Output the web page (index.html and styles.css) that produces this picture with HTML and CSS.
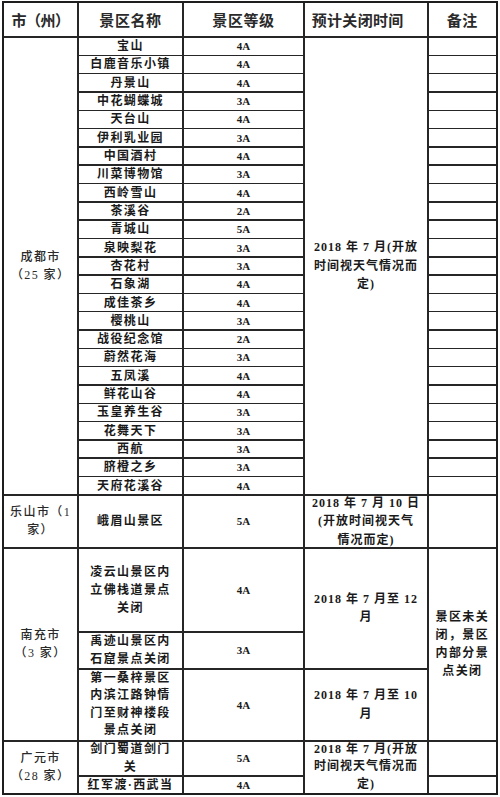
FILE: index.html
```html
<!DOCTYPE html>
<html lang="zh-CN">
<head>
<meta charset="utf-8">
<title>景区关闭时间</title>
<link rel="stylesheet" href="styles.css">
</head>
<body>
<div class="sheet">
  <div class="cell head h-city">市（州）</div>
  <div class="cell head">景区名称</div>
  <div class="cell head">景区等级</div>
  <div class="cell head h-time">预计关闭时间</div>
  <div class="cell head">备注</div>

  <div class="cell city span-25">成都市<br>（25 家）</div>
  <div class="cell name">宝山</div><div class="cell grade">4A</div>
  <div class="cell time span-25">2018 年 7 月(开放<br>时间视天气情况而<br>定)</div>
  <div class="cell"></div>
  <div class="cell name">白鹿音乐小镇</div><div class="cell grade">4A</div><div class="cell"></div>
  <div class="cell name">丹景山</div><div class="cell grade">4A</div><div class="cell"></div>
  <div class="cell name">中花蝴蝶城</div><div class="cell grade">3A</div><div class="cell"></div>
  <div class="cell name">天台山</div><div class="cell grade">4A</div><div class="cell"></div>
  <div class="cell name">伊利乳业园</div><div class="cell grade">3A</div><div class="cell"></div>
  <div class="cell name">中国酒村</div><div class="cell grade">4A</div><div class="cell"></div>
  <div class="cell name">川菜博物馆</div><div class="cell grade">3A</div><div class="cell"></div>
  <div class="cell name">西岭雪山</div><div class="cell grade">4A</div><div class="cell"></div>
  <div class="cell name">茶溪谷</div><div class="cell grade">2A</div><div class="cell"></div>
  <div class="cell name">青城山</div><div class="cell grade">5A</div><div class="cell"></div>
  <div class="cell name">泉映梨花</div><div class="cell grade">3A</div><div class="cell"></div>
  <div class="cell name">杏花村</div><div class="cell grade">3A</div><div class="cell"></div>
  <div class="cell name">石象湖</div><div class="cell grade">4A</div><div class="cell"></div>
  <div class="cell name">成佳茶乡</div><div class="cell grade">4A</div><div class="cell"></div>
  <div class="cell name">樱桃山</div><div class="cell grade">3A</div><div class="cell"></div>
  <div class="cell name">战役纪念馆</div><div class="cell grade">2A</div><div class="cell"></div>
  <div class="cell name">蔚然花海</div><div class="cell grade">3A</div><div class="cell"></div>
  <div class="cell name">五凤溪</div><div class="cell grade">4A</div><div class="cell"></div>
  <div class="cell name">鲜花山谷</div><div class="cell grade">4A</div><div class="cell"></div>
  <div class="cell name">玉皇养生谷</div><div class="cell grade">3A</div><div class="cell"></div>
  <div class="cell name">花舞天下</div><div class="cell grade">3A</div><div class="cell"></div>
  <div class="cell name">西航</div><div class="cell grade">3A</div><div class="cell"></div>
  <div class="cell name">脐橙之乡</div><div class="cell grade">3A</div><div class="cell"></div>
  <div class="cell name">天府花溪谷</div><div class="cell grade">4A</div><div class="cell"></div>

  <div class="cell city">乐山市（1<br>家）</div>
  <div class="cell name">峨眉山景区</div>
  <div class="cell grade">5A</div>
  <div class="cell time">2018 年 7 月 10 日<br>(开放时间视天气<br>情况而定)</div>
  <div class="cell"></div>

  <div class="cell city span-3">南充市<br>（3 家）</div>
  <div class="cell name">凌云山景区内<br>立佛栈道景点<br>关闭</div>
  <div class="cell grade">4A</div>
  <div class="cell time span-2">2018 年 7 月至 12<br>月</div>
  <div class="cell note span-3">景区未关<br>闭，景区<br>内部分景<br>点关闭</div>
  <div class="cell name">禹迹山景区内<br>石窟景点关闭</div>
  <div class="cell grade">3A</div>
  <div class="cell name tight">第一桑梓景区<br>内滨江路钟情<br>门至财神楼段<br>景点关闭</div>
  <div class="cell grade">4A</div>
  <div class="cell time">2018 年 7 月至 10<br>月</div>

  <div class="cell city span-2">广元市<br>（28 家）</div>
  <div class="cell name">剑门蜀道剑门<br>关</div>
  <div class="cell grade">5A</div>
  <div class="cell time span-2 tight">2018 年 7 月(开放<br>时间视天气情况而<br>定)</div>
  <div class="cell"></div>
  <div class="cell name">红军渡·西武当</div>
  <div class="cell grade">4A</div>
  <div class="cell"></div>
</div>
</body>
</html>
```

FILE: styles.css
```css
html, body {
  margin: 0;
  padding: 0;
  background: #ffffff;
}

body {
  padding: 1px 0 0 2px;
}

.sheet {
  display: grid;
  width: 496px;
  box-sizing: border-box;
  border: 2px solid #1e1e1e;
  background: #262626;
  gap: 1.5px;
  grid-template-columns: 73.25px 103.5px 119.5px 122.5px 67.25px;
  grid-template-rows:
    33.25px
    repeat(25, 16.82px)
    51.5px 82.5px 35.5px 70.5px 33.5px 16.25px;
  color: #1a1a1a;
}

.cell {
  background: #ffffff;
  display: flex;
  align-items: center;
  justify-content: center;
  text-align: center;
  white-space: nowrap;
  font-family: "Liberation Serif", "Noto Sans CJK SC", serif;
  font-size: 12px;
  font-weight: 700;
  line-height: 18px;
  letter-spacing: 1.4px;
  min-height: 0;
}

.span-25 { grid-row: span 25; }
.span-3 { grid-row: span 3; }
.span-2 { grid-row: span 2; }

.head {
  font-family: "Noto Sans CJK SC", "Noto Sans", sans-serif;
  font-size: 15px;
  font-weight: 700;
  line-height: 20px;
  letter-spacing: 0.6px;
  color: #2a2a2a;
}

.h-city {
  letter-spacing: -0.5px;
}

.h-time {
  justify-content: flex-start;
  padding-left: 7px;
  letter-spacing: 0.3px;
}

.grade {
  font-size: 11px;
  letter-spacing: 0;
}

.time {
  line-height: 18.5px;
  letter-spacing: 1px;
}

.tight {
  line-height: 17.5px;
}

.city {
  font-weight: 500;
  color: #2a2a2a;
}
```
